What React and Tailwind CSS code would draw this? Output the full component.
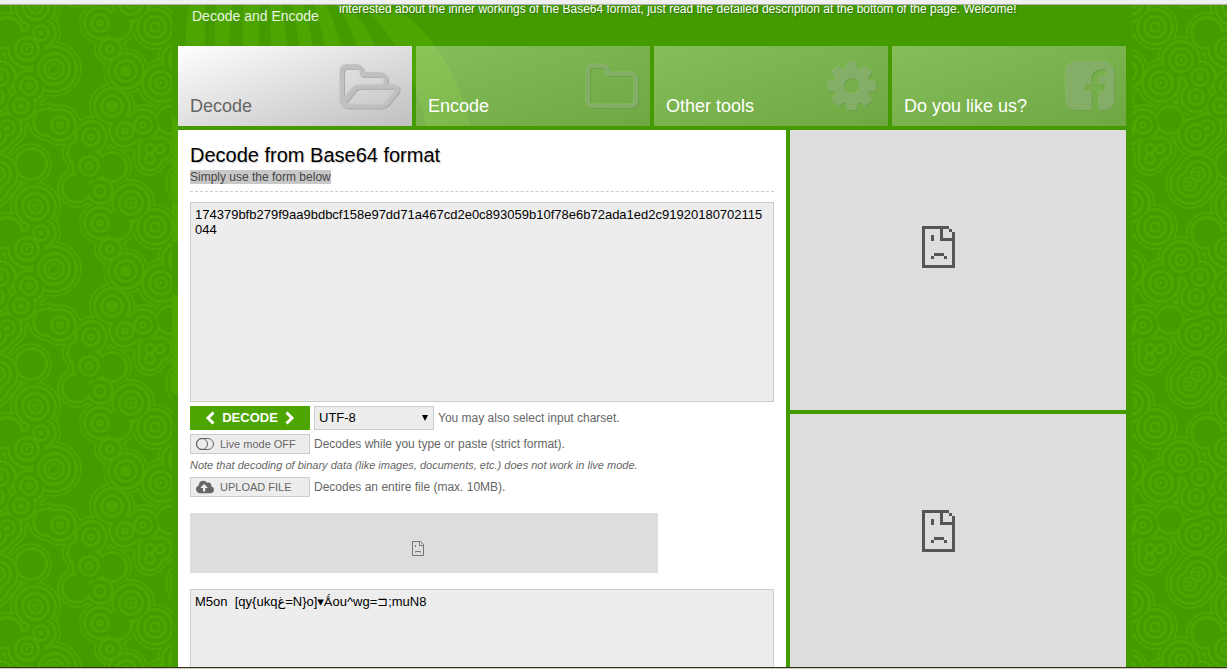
import React from "react";
import { FaCloudUploadAlt } from "react-icons/fa";

// Centre x, centre y, radius and kind of every disc in the 200px wallpaper tile.
const DISCS = [
  [36, 7, 17, "a"], [7, 33, 13, "d"], [41, 33, 12, "b"], [27, 49, 16, "a"], [54, 69, 20, "a"],
  [29, 86, 13, "a"], [0, 77, 13, "a"], [196, 97, 12, "a"], [21, 106, 12, "b"], [100, 23, 13, "b"],
  [117, 25, 12, "d"], [110, 49, 8, "b"], [126, 71, 15, "c"], [112, 106, 15, "c"], [155, 27, 15, "a"],
  [161, 83, 16, "a"], [181, 60, 16, "a"], [91, 137, 13, "a"], [125, 131, 13, "a"], [143, 125, 13, "a"],
  [47, 122, 11, "d"], [60, 125, 13, "b"], [7, 128, 12, "b"], [89, 166, 14, "a"], [112, 167, 12, "d"],
  [150, 149, 9, "b"], [160, 149, 9, "b"], [150, 159, 9, "b"], [31, 164, 13, "d"], [198, 174, 17, "a"],
  [190, 184, 17, "a"], [77, 188, 12, "d"], [100, 191, 10, "c"], [131, 3, 16, "a"], [35, 206, 17, "a"],
  [170, 120, 11, "d"], [196, 135, 15, "a"], [80, 153, 10, "d"],
];

const LEVELS = [8, 6, 4, 1, -3, -6, -9, -12, -14, -16];

function Wallpaper() {
  const shapes = [];
  LEVELS.forEach((grow, level) => {
    DISCS.forEach(([cx, cy, r, kind], i) => {
      const radius = r + grow;
      if (radius < 1) return;
      if (kind === "d" && grow < 0) return;
      if (kind === "c" && grow < -9) return;
      const fill = level % 2 ? "#439b00" : "#4da500";
      [-200, 0, 200].forEach((dx) =>
        [-200, 0, 200].forEach((dy) => {
          const x = cx + dx;
          const y = cy + dy;
          if (x + radius < 0 || x - radius > 200 || y + radius < 0 || y - radius > 200) return;
          shapes.push(<circle key={`${level}-${i}-${dx}-${dy}`} cx={x} cy={y} r={radius} fill={fill} />);
        })
      );
    });
  });
  return (
    <svg className="absolute inset-0 -z-10 h-full w-full" aria-hidden="true">
      <defs>
        <pattern id="discs" width="200" height="200" patternUnits="userSpaceOnUse">
          <rect width="200" height="200" fill="#439b00" />
          {shapes}
        </pattern>
      </defs>
      <rect width="100%" height="100%" fill="url(#discs)" />
    </svg>
  );
}

function Rays() {
  return (
    <svg className="absolute left-0 top-0 -z-10" width="320" height="500" aria-hidden="true" fill="#4da500">
      <path d="M18 0C14 15 13 28 14 41L28 121H50C36 95 30 35 34 0Z" />
      <path d="M44 0C40 35 46 85 56 121H72C60 85 54 35 60 0Z" />
      <path d="M72 0C68 35 74 85 82 121H98C90 85 84 35 88 0Z" />
      <path d="M98 0C98 35 102 85 106 121H122C118 80 116 35 110 0Z" />
      <path d="M120 0C128 35 132 85 132 121H148C148 80 142 35 131 0Z" />
      <path d="M141 0C153 25 161 85 163 121H182C180 80 170 30 154 0Z" />
      <path d="M164 0C184 25 198 75 204 121H222C218 80 206 30 176 0Z" />
      <path d="M188 0C222 25 244 75 254 121H298C286 65 256 20 216 0Z" />
      <path d="M0 111L6 117V195H0ZM0 196L6 197V237H0ZM0 289L6 290V391L0 387Z" />
    </svg>
  );
}

const FOLDER_OPEN =
  "M1781 1055q0-23-31-23h-1088q-40 0-85.500 21.500t-71.500 52.500l-294 363q-18 24-18 40 0 23 35 23h1088q40 0 86-22t71-53l294-363q15-22 15-39zm-1141-151h768v-160q0-40-28-68t-68-28h-576q-40 0-68-28t-28-68v-64q0-40-28-68t-68-28h-320q-40 0-68 28t-28 68v853l256-315q44-53 116-87.500t140-34.500zm1269 151q0 62-46 120l-295 363q-43 53-116 87.500t-140 34.500h-1088q-92 0-158-66t-66-158v-960q0-92 66-158t158-66h320q92 0 158 66t66 158v32h544q92 0 158 66t66 158v160h192q54 0 99 24.500t67 70.500q15 32 15 68z";
const FOLDER =
  "M1600 1312v-704q0-40-28-68t-68-28h-704q-40 0-68-28t-28-68v-64q0-40-28-68t-68-28h-320q-40 0-68 28t-28 68v960q0 40 28 68t68 28h1216q40 0 68-28t28-68zm128-704v704q0 92-66 158t-158 66h-1216q-92 0-158-66t-66-158v-960q0-92 66-158t158-66h320q92 0 158 66t66 158v32h672q92 0 158 66t66 158z";
const COG =
  "M1152 896q0-106-75-181t-181-75-181 75-75 181 75 181 181 75 181-75 75-181zm512-109v222q0 12-8 23t-20 13l-185 28q-19 54-39 91 35 50 107 138 10 12 10 25t-9 23q-27 37-99 108t-94 71q-12 0-26-9l-138-108q-44 23-91 38-16 136-29 186-7 28-36 28h-222q-14 0-24.500-8.500t-11.500-21.500l-28-184q-49-16-90-37l-141 107q-10 9-25 9-14 0-25-11-126-114-165-168-7-10-7-23 0-12 8-23 15-21 51-66.500t54-70.500q-27-50-41-99l-183-27q-13-2-21-12.500t-8-23.500v-222q0-12 8-23t19-13l186-28q14-46 39-92-40-57-107-138-10-12-10-24 0-10 9-23 26-36 98.500-107.500t94.500-71.500q13 0 26 10l138 107q44-23 91-38 16-136 29-186 7-28 36-28h222q14 0 24.500 8.500t11.500 21.500l28 184q49 16 90 37l142-107q9-9 24-9 13 0 25 10 129 119 165 170 7 8 7 22 0 12-8 23-15 21-51 66.500t-54 70.500q26 50 41 98l183 28q13 2 21 12.500t8 23.500z";
const FACEBOOK =
  "M1376 128q119 0 203.500 84.500t84.500 203.500v960q0 119-84.500 203.500t-203.500 84.500h-188v-595h199l30-232h-229v-148q0-56 23.500-84t91.500-28l122-1v-207q-63-9-178-9-136 0-217.500 80t-81.500 226v171h-200v232h200v595h-532q-119 0-203.500-84.500t-84.500-203.500v-960q0-119 84.500-203.500t203.500-84.500h960z";

const TABS = [
  { label: "Decode", path: FOLDER_OPEN, box: "0 48 1920 1792", width: 60, active: true },
  { label: "Encode", path: FOLDER, box: "64 -64 1664 1792", width: 52 },
  { label: "Other tools", path: COG, box: "128 0 1536 1792", width: 48 },
  { label: "Do you like us?", path: FACEBOOK, box: "128 0 1536 1792", width: 48 },
];

function Tab({ label, path, box, width, active }) {
  const look = active
    ? "bg-linear-to-br from-white to-[#c0c0c0] text-[#666]"
    : "bg-linear-to-br from-white/35 to-[#c0c0c0]/35 text-white";
  return (
    <a href="#" className={`flex h-20 justify-between px-3 ${look}`}>
      <span className="self-end pb-2 text-lg leading-6">{label}</span>
      <svg
        className={`mt-3 overflow-visible ${
          active
            ? "fill-[#c0c0c0] drop-shadow-[1px_1px_0px_#aaaaaa]"
            : "fill-[#84ae68] drop-shadow-[1px_1px_0px_#6d9f4a]"
        }`}
        width={width}
        height="56"
        viewBox={box}
        aria-hidden="true"
      >
        <path d={path} className={active ? "fill-[#c8c8c8]" : "fill-[#8cb86c]"} transform="translate(-20 -20)" />
        <path d={path} />
      </svg>
    </a>
  );
}

function SadPage({ className }) {
  return (
    <svg className={className} viewBox="0 0 11 14" fill="#555" shapeRendering="crispEdges" aria-hidden="true">
      <path d="M0 0H9V1H7V4H10V2H11V14H0ZM1 1V13H10V5H6V1Z" fillRule="evenodd" />
      <path d="M9 1H10V2H9ZM3 3H4V5H3ZM4 9H7.340V10H4ZM3 10H4V11H3ZM7.340 10H8.340V11H7.340Z" />
    </svg>
  );
}

function Chevron({ d }) {
  return (
    <svg width="10" height="14" fill="none" stroke="white" strokeWidth="3" aria-hidden="true">
      <path d={d} />
    </svg>
  );
}

const smallButton =
  "flex h-5 w-[120px] shrink-0 items-center gap-[6px] border border-[#ccc] bg-[#ededed] pl-[5px] text-[11px] text-[#666]";
const area =
  "block w-full resize-none overflow-hidden break-all border border-[#ccc] bg-[#ededed] px-1 py-1 text-[13px] leading-[15px] text-black outline-none";

export default function App() {
  return (
    <div className="relative isolate flex h-screen flex-col overflow-hidden font-['Liberation_Sans',Arial,sans-serif] text-xs text-[#666]">
      <Wallpaper />
      <div className="z-10 h-[5px] shrink-0 border-b border-[#b0b0b0] bg-[#f0f0f0]" />
      <div className="relative isolate ml-[172px] mr-[95px] flex min-h-0 flex-1 flex-col px-[6px]">
        <div className="absolute inset-0 -z-20 bg-[#439b00]" />
        <Rays />
        <header className="flex h-[41px] shrink-0 pl-[14px] text-white">
          <p className="w-[147px] pt-[3px] text-sm leading-4 text-[#eaf5e2]">Decode and Encode</p>
          <p className="-mt-1 leading-4 [text-shadow:1px_1px_1px_#2f7000]">
            interested about the inner workings of the Base64 format, just read the detailed description at the
            bottom of the page. Welcome!
          </p>
        </header>
        <nav className="grid shrink-0 grid-cols-4 gap-1">
          {TABS.map((tab) => (
            <Tab key={tab.label} {...tab} />
          ))}
        </nav>
        <div className="mt-1 flex min-h-0 flex-1 gap-1">
          <main className="min-w-0 flex-1 overflow-hidden bg-white px-3 pt-[13px]">
            <h1 className="text-xl leading-6 text-black [text-shadow:1px_1px_1px_#ccc]">
              Decode from Base64 format
            </h1>
            <p className="mt-[3px] border-b border-dashed border-[#ccc] pb-[7px] leading-[14px]">
              <span className="inline-block bg-[#c8c8c8] text-[#444]">Simply use the form below</span>
            </p>
            <textarea
              aria-label="Base64 input"
              spellCheck={false}
              className={`mt-[10px] h-[200px] ${area}`}
              defaultValue="174379bfb279f9aa9bdbcf158e97dd71a467cd2e0c893059b10f78e6b72ada1ed2c91920180702115044"
            />
            <div className="mt-1 flex items-center gap-1">
              <button className="flex h-6 w-[120px] items-center justify-center gap-[7px] bg-[#4da500] text-[13px] font-bold text-white">
                <Chevron d="M8.500 1.500L3 7L8.500 12.500" />
                DECODE
                <Chevron d="M1.500 1.500L7 7L1.500 12.500" />
              </button>
              <div className="relative">
                <select
                  id="charset"
                  className="block h-6 w-[120px] appearance-none border border-[#ccc] bg-[#ededed] px-1 text-[13px] text-black"
                >
                  <option>UTF-8</option>
                </select>
                <svg className="pointer-events-none absolute right-[6px] top-[9px]" width="6" height="6" aria-hidden="true">
                  <path d="M0 0H6L3 6Z" />
                </svg>
              </div>
              <label htmlFor="charset">You may also select input charset.</label>
            </div>
            <div className="mt-1 flex items-center gap-1">
              <button className={smallButton}>
                <svg width="18" height="12" fill="none" stroke="#666" aria-hidden="true">
                  <rect x="0.5" y="0.5" width="17" height="11" rx="5.5" />
                  <circle cx="6" cy="6" r="5.5" />
                </svg>
                Live mode OFF
              </button>
              <span>Decodes while you type or paste (strict format).</span>
            </div>
            <p className="mt-1 text-[11px] italic leading-[15px]">
              Note that decoding of binary data (like images, documents, etc.) does not work in live mode.
            </p>
            <div className="mt-1 flex items-center gap-1">
              <button className={smallButton}>
                <FaCloudUploadAlt className="h-4 w-[18px]" />
                UPLOAD FILE
              </button>
              <span>Decodes an entire file (max. 10MB).</span>
            </div>
            <div className="mt-4 h-[60px] max-w-[468px] bg-[#ddd] pl-[222px] pt-7">
              <svg width="12" height="15" fill="none" stroke="#777" aria-hidden="true">
                <path d="M.5 .5H8.500L11.500 3.500V14.500H.5ZM7.500 .5V4.500H11.500M3.500 4V6M3.500 11.500V10.500H8.500V11.500" />
              </svg>
            </div>
            <textarea
              aria-label="Decoded output"
              spellCheck={false}
              readOnly
              className={`mt-4 h-[200px] font-['Liberation_Sans','DejaVu_Sans','Noto_Sans_CJK_JP',sans-serif] ${area}`}
              value={"M5on  [qy{ukqغ\u200e=N}o]▾Ǻou^wg=⊐;muN8"}
            />
          </main>
          <aside className="flex w-[336px] shrink-0 flex-col gap-1 overflow-hidden">
            <div className="h-[280px] shrink-0 bg-[#ddd] pl-[132px] pt-24">
              <SadPage className="h-[42px] w-[33px]" />
            </div>
            <div className="h-[280px] shrink-0 bg-[#ddd] pl-[132px] pt-24">
              <SadPage className="h-[42px] w-[33px]" />
            </div>
          </aside>
        </div>
      </div>
      <div className="h-[2px] shrink-0 border-t border-[#33331f] bg-[#d0c8b8]" />
    </div>
  );
}
